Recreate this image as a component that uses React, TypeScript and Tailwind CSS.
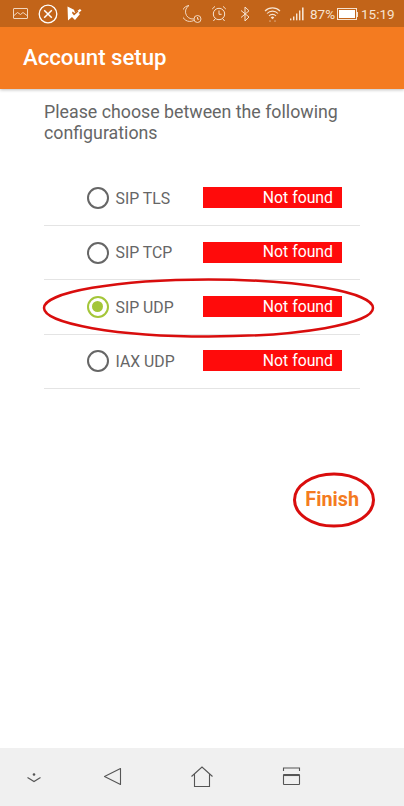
import { useState } from 'react';

const font = { fontFamily: 'Roboto, sans-serif' };

const configs = ['SIP TLS', 'SIP TCP', 'SIP UDP', 'IAX UDP'];

function StatusBar() {
  return (
    <div className="h-[27px] bg-[#c26419] flex items-center text-[#f6e3d1] relative shrink-0">
      <div className="flex items-center ml-[13px] gap-[10px]">
        <svg width="15" height="11" viewBox="0 0 15 11" fill="none" stroke="currentColor" strokeWidth="0.9">
          <rect x="0.5" y="0.5" width="14" height="10" rx="0.5" />
          <path d="M1 7.5l3.5-3 3 2 2.5-2 4 3" />
        </svg>
        <svg width="20" height="20" viewBox="0 0 20 20" fill="none" stroke="#fff" strokeWidth="1.3">
          <circle cx="10" cy="10" r="8.8" />
          <path d="M6.2 6.2l7.6 7.6M13.8 6.2l-7.6 7.6" strokeWidth="1.5" />
        </svg>
        <svg width="15" height="15" viewBox="0 0 15 15" fill="#fff" className="-ml-[1px]">
          <path d="M0.5 0.5L7 3.8 8 6.5 13 3l1.5 1.5-3 2.5 1.5 1-5 6-3-3-4 3.5z" />
          <path d="M5 7l2 2.5L11.5 5.5l-1-1L7.5 7 5.5 5.5z" fill="#c26419" />
        </svg>
      </div>
      <div className="absolute left-[183px] top-[4px] flex items-center">
        <svg width="20" height="20" viewBox="0 0 20 20" fill="none" stroke="currentColor" strokeWidth="0.9">
          <path d="M6 1.5a8 8 0 1 0 7.5 12.5a7 7 0 0 1-7.5-12.5z" />
          <circle cx="14.5" cy="15" r="3.5" fill="#c26419" />
          <path d="M14.5 13v2.2h1.6" />
        </svg>
      </div>
      <div className="absolute left-[211px] top-[5px]">
        <svg width="16" height="17" viewBox="0 0 16 17" fill="none" stroke="currentColor" strokeWidth="1">
          <circle cx="8" cy="9" r="5.7" />
          <path d="M8 5.5V9.3h2.6M1.2 4L4 1.4M14.8 4L12 1.4M4 14l-1.6 2M12 14l1.6 2" />
        </svg>
      </div>
      <div className="absolute left-[240px] top-[6px]">
        <svg width="10" height="16" viewBox="0 0 10 16" fill="none" stroke="currentColor" strokeWidth="1">
          <path d="M1 4.5l8 6.5-4 4V1l4 3.8L1 11.5" />
        </svg>
      </div>
      <div className="absolute left-[264px] top-[6px]">
        <svg width="17" height="17" viewBox="0 0 17 17" fill="none" stroke="currentColor" strokeWidth="1.1">
          <path d="M1 5a10.5 10.5 0 0 1 15 0M3 7.5a7.5 7.5 0 0 1 11 0M5 10a4.5 4.5 0 0 1 7 0" />
          <path d="M6.7 11.5a2.4 2.4 0 0 1 3.6 0L8.5 13.2z" fill="currentColor" stroke="none" />
          <path d="M5 15.5l1-1.5 1 1.5zM10 15.5l1-1.5 1 1.5z" fill="currentColor" stroke="none" opacity="0.7" />
        </svg>
      </div>
      <div className="absolute left-[290px] top-[7px]">
        <svg width="15" height="14" viewBox="0 0 15 14" fill="currentColor">
          <rect x="0" y="11.5" width="1.4" height="1.8" />
          <rect x="3" y="9.5" width="1.4" height="3.8" />
          <rect x="6" y="6.5" width="1.4" height="6.8" />
          <rect x="9" y="3.5" width="1.4" height="9.8" />
          <rect x="12" y="0.5" width="1.6" height="12.8" />
        </svg>
      </div>
      <span className="absolute left-[310px] top-[5px] text-[13.5px] leading-[18px]" style={font}>87%</span>
      <div className="absolute left-[337px] top-[8px] flex items-center">
        <div className="w-[20px] h-[12px] border border-[#f6e3d1] p-[1px]">
          <div className="w-[16px] h-full bg-white" />
        </div>
        <div className="w-[1px] h-[5px] bg-[#f6e3d1]" />
      </div>
      <span className="absolute left-[361px] top-[5px] text-[13.5px] leading-[18px]" style={font}>15:19</span>
    </div>
  );
}

function Row({ label, checked, onSelect }: { label: string; checked: boolean; onSelect: () => void }) {
  return (
    <div
      onClick={onSelect}
      className="h-[54.4px] border-b border-[#e4e4e4] flex items-center pl-[42.5px]"
    >
      <div
        className={`w-[22px] h-[22px] rounded-full border-2 flex items-center justify-center shrink-0 ${
          checked ? 'border-[#a4c639]' : 'border-[#666666]'
        }`}
      >
        {checked && <div className="w-[11px] h-[11px] rounded-full bg-[#a4c639]" />}
      </div>
      <span className="w-[94.5px] pl-[7px] pt-[1px] text-[15.8px] text-[#666666]" style={font}>
        {label}
      </span>
      <div className="w-[139px] h-[21px] mb-[1px] bg-[#ff0b0b] flex items-center justify-end pr-[9px] text-white text-[15.8px]" style={font}>
        Not found
      </div>
    </div>
  );
}

function NavBar() {
  return (
    <div className="h-[58px] bg-[#f0f0f0] shrink-0 relative text-[#555555]">
      <svg className="absolute left-[25px] top-[23px]" width="18" height="14" viewBox="0 0 18 14" fill="none" stroke="currentColor" strokeWidth="1.1">
        <circle cx="9" cy="3.5" r="1.3" fill="currentColor" stroke="none" />
        <path d="M2.5 6.5L9 10.5l6.5-4" />
      </svg>
      <svg className="absolute left-[103px] top-[19px]" width="19" height="20" viewBox="0 0 19 20" fill="none" stroke="currentColor" strokeWidth="1.1">
        <path d="M17.5 1.5v16L1.5 9.5z" strokeLinejoin="round" />
      </svg>
      <svg className="absolute left-[190px] top-[18px]" width="24" height="22" viewBox="0 0 24 22" fill="none" stroke="currentColor" strokeWidth="1.1">
        <path d="M1.5 10.5L12 1l10.5 9.5M4.5 8v12.5h15V8" />
      </svg>
      <svg className="absolute left-[282px] top-[19px]" width="19" height="19" viewBox="0 0 19 19" fill="none" stroke="currentColor" strokeWidth="1.1">
        <path d="M1.5 4V1h16v3" />
        <rect x="1.5" y="7.5" width="16" height="10" rx="0.5" />
        <path d="M1.5 8.5h16" />
      </svg>
    </div>
  );
}

export default function App() {
  const [selected, setSelected] = useState('SIP UDP');

  return (
    <div className="w-[404px] h-[806px] bg-white flex flex-col relative overflow-hidden" style={font}>
      <StatusBar />

      {/* App bar */}
      <div className="h-[62px] bg-[#f47b20] flex items-center pl-[23px] shrink-0 shadow-[0_1px_3px_rgba(0,0,0,0.25)]">
        <h1 className="text-white text-[22.2px] font-medium">Account setup</h1>
      </div>

      <div className="flex-1 px-[44px] pt-[12px] relative">
        <p className="w-[316px] text-[17.8px] leading-[21px] text-[#666666]">
          Please choose between the following configurations
        </p>

        <div className="w-[316px] mt-[28.5px]">
          {configs.map((c) => (
            <Row key={c} label={c} checked={selected === c} onSelect={() => setSelected(c)} />
          ))}
        </div>

        <div className="flex justify-end w-[316px] mt-[96px]">
          <button className="mr-[1px] text-[#f47b20] text-[19.8px] font-bold">Finish</button>
        </div>
      </div>

      <NavBar />

      {/* red annotations drawn over the screenshot */}
      <svg className="absolute left-0 top-0 pointer-events-none" width="404" height="806" fill="none" stroke="#d90d0d">
        <ellipse cx="208.5" cy="308" rx="164.5" ry="28.5" strokeWidth="2.5" />
        <ellipse cx="334" cy="500" rx="39.5" ry="26" strokeWidth="3" />
      </svg>
    </div>
  );
}
